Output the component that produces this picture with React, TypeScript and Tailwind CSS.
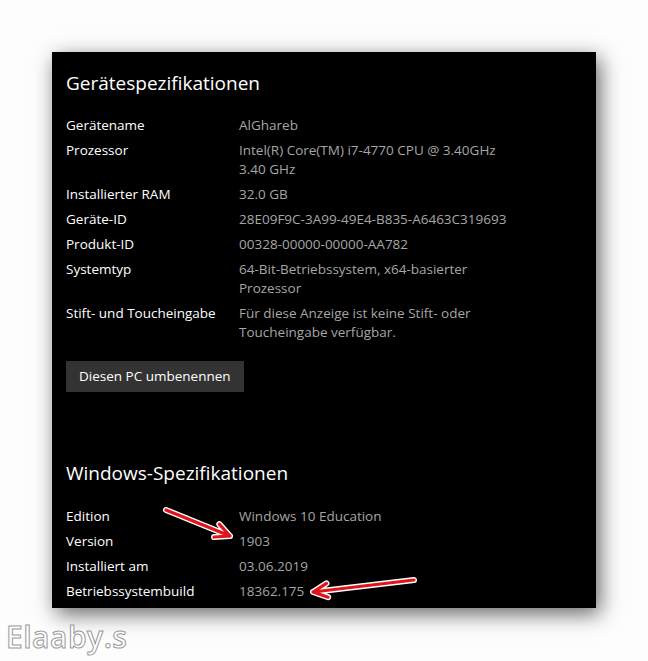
import React from 'react';

interface SpecRow {
  label: string;
  value: React.ReactNode;
}

const deviceSpecs: SpecRow[] = [
  { label: 'Gerätename', value: 'AlGhareb' },
  {
    label: 'Prozessor',
    value: (
      <>
        Intel(R) Core(TM) i7-4770 CPU @ 3.40GHz
        <br />
        3.40 GHz
      </>
    ),
  },
  { label: 'Installierter RAM', value: '32.0 GB' },
  { label: 'Geräte-ID', value: '28E09F9C-3A99-49E4-B835-A6463C319693' },
  { label: 'Produkt-ID', value: '00328-00000-00000-AA782' },
  {
    label: 'Systemtyp',
    value: (
      <>
        64-Bit-Betriebssystem, x64-basierter
        <br />
        Prozessor
      </>
    ),
  },
  {
    label: 'Stift- und Toucheingabe',
    value: (
      <>
        Für diese Anzeige ist keine Stift- oder
        <br />
        Toucheingabe verfügbar.
      </>
    ),
  },
];

const windowsSpecs: SpecRow[] = [
  { label: 'Edition', value: 'Windows 10 Education' },
  { label: 'Version', value: '1903' },
  { label: 'Installiert am', value: '03.06.2019' },
  { label: 'Betriebssystembuild', value: '18362.175' },
];

const SpecList: React.FC<{ rows: SpecRow[] }> = ({ rows }) => (
  <div className="flex flex-col gap-[6px] text-[13.5px] leading-[19px]">
    {rows.map(row => (
      <div key={row.label} className="flex">
        <div className="w-[173px] shrink-0 text-white">{row.label}</div>
        <div className="text-[#a6a6a6]">{row.value}</div>
      </div>
    ))}
  </div>
);

// Red annotation arrow with white outline
const Arrow: React.FC<{ x1: number; y1: number; x2: number; y2: number }> = ({ x1, y1, x2, y2 }) => {
  const angle = Math.atan2(y2 - y1, x2 - x1);
  const len = 16;
  const spread = 0.45;
  const ax = x2 - len * Math.cos(angle - spread);
  const ay = y2 - len * Math.sin(angle - spread);
  const bx = x2 - len * Math.cos(angle + spread);
  const by = y2 - len * Math.sin(angle + spread);
  const d = `M${x1} ${y1} L${x2} ${y2} M${ax} ${ay} L${x2} ${y2} L${bx} ${by}`;
  return (
    <g strokeLinecap="round" strokeLinejoin="round" fill="none">
      <path d={d} stroke="rgba(0,0,0,0.35)" strokeWidth={7} transform="translate(1.5 1.5)" />
      <path d={d} stroke="#ffffff" strokeWidth={6} />
      <path d={d} stroke="#e0141b" strokeWidth={3.2} />
    </g>
  );
};

export default function App() {
  return (
    <div
      className="relative w-[648px] h-[661px] bg-[#fdfdfd] overflow-hidden"
      style={{ fontFamily: '"Open Sans", "Noto Sans", sans-serif' }}
    >
      <div className="pt-[52px] pl-[52px]">
        <div className="w-[544px] h-[556px] bg-black shadow-[4px_6px_20px_rgba(0,0,0,0.6)] pl-[14px] pt-[17px]">
          <h2 className="text-[19px] leading-[28px] text-white">Gerätespezifikationen</h2>
          <div className="mt-[19px]">
            <SpecList rows={deviceSpecs} />
          </div>
          <button className="mt-[19px] h-[31px] px-[13px] bg-[#333333] text-white text-[13.5px]">
            Diesen PC umbenennen
          </button>
          <h2 className="mt-[67px] text-[19px] leading-[28px] text-white">Windows-Spezifikationen</h2>
          <div className="mt-[20px]">
            <SpecList rows={windowsSpecs} />
          </div>
        </div>
      </div>

      <svg className="absolute inset-0 pointer-events-none" width={648} height={661}>
        <Arrow x1={166} y1={510} x2={230} y2={536} />
        <Arrow x1={414} y1={580} x2={313} y2={592} />
      </svg>

      <div className="absolute left-[6px] top-[619px] text-[30px] leading-[36px] font-semibold text-white [-webkit-text-stroke:1px_#9a9a9a] tracking-[0.5px]">
        Elaaby.s
      </div>
    </div>
  );
}
